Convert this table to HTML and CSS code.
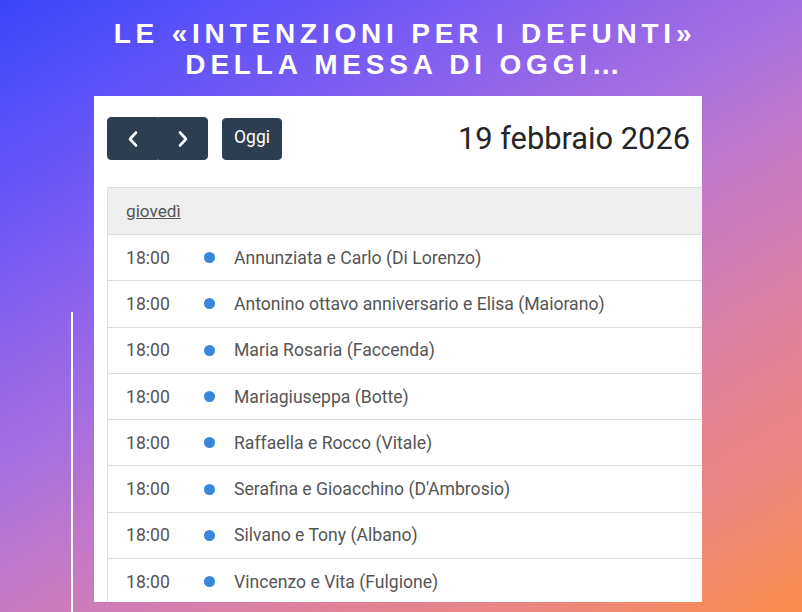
FILE: index.html
```html
<!DOCTYPE html>
<html lang="it">
<head>
<meta charset="utf-8">
<title>Intenzioni per i defunti</title>
<link rel="stylesheet" href="styles.css">
</head>
<body>
<div class="page">
  <h1 class="headline">LE «INTENZIONI PER I DEFUNTI»<br>DELLA MESSA DI OGGI…</h1>
  <div class="stage">
    <div class="rule"></div>
    <div class="panel">
      <div class="toolbar">
        <div class="left">
          <div class="group">
            <button class="btn icon" aria-label="precedente">
              <svg width="14" height="18" viewBox="0 0 14 18"><path d="M10 2.5 L4 9 L10 15.5" fill="none" stroke="#fff" stroke-width="2.6" stroke-linecap="round" stroke-linejoin="round"/></svg>
            </button>
            <button class="btn icon" aria-label="successivo">
              <svg width="14" height="18" viewBox="0 0 14 18"><path d="M4 2.5 L10 9 L4 15.5" fill="none" stroke="#fff" stroke-width="2.6" stroke-linecap="round" stroke-linejoin="round"/></svg>
            </button>
          </div>
          <button class="btn today">Oggi</button>
        </div>
        <h2 class="title">19 febbraio 2026</h2>
      </div>
      <div class="list">
        <div class="day"><a href="#">giovedì</a></div>
        <div class="row"><span class="time">18:00</span><span class="dot"></span><span class="name">Annunziata e Carlo (Di Lorenzo)</span></div>
        <div class="row"><span class="time">18:00</span><span class="dot"></span><span class="name">Antonino ottavo anniversario e Elisa (Maiorano)</span></div>
        <div class="row"><span class="time">18:00</span><span class="dot"></span><span class="name">Maria Rosaria (Faccenda)</span></div>
        <div class="row"><span class="time">18:00</span><span class="dot"></span><span class="name">Mariagiuseppa (Botte)</span></div>
        <div class="row"><span class="time">18:00</span><span class="dot"></span><span class="name">Raffaella e Rocco (Vitale)</span></div>
        <div class="row"><span class="time">18:00</span><span class="dot"></span><span class="name">Serafina e Gioacchino (D'Ambrosio)</span></div>
        <div class="row"><span class="time">18:00</span><span class="dot"></span><span class="name">Silvano e Tony (Albano)</span></div>
        <div class="row"><span class="time">18:00</span><span class="dot"></span><span class="name">Vincenzo e Vita (Fulgione)</span></div>
      </div>
    </div>
  </div>
</div>
</body>
</html>
```

FILE: styles.css
```css
html, body {
  margin: 0;
  padding: 0;
}
body {
  width: 802px;
  height: 612px;
  overflow: hidden;
  background: linear-gradient(150deg, #3a46fc 0%, #7a5cf4 25%, #a56ee0 43%, #c77ac4 57%, #d880a8 68%, #ec8680 85%, #fc8c4c 100%);
  font-family: Roboto, "Liberation Sans", sans-serif;
}
.page {
  height: 612px;
  display: flex;
  flex-direction: column;
}
.headline {
  margin: 0;
  padding-top: 18px;
  padding-left: 8px;
  text-align: center;
  color: #fff;
  font-family: "Liberation Sans", Arial, sans-serif;
  font-weight: 700;
  font-size: 28px;
  line-height: 31px;
  letter-spacing: 4.8px;
  height: 78px;
  box-sizing: border-box;
}
.stage {
  flex: 1;
  display: flex;
  align-items: flex-start;
  padding-left: 71px;
}
.rule {
  width: 2px;
  height: 300px;
  margin-top: 234px;
  background: #fff;
  flex: none;
}
.panel {
  margin-left: 21px;
  margin-top: 18px;
  width: 608px;
  height: 506px;
  background: #fff;
  overflow: hidden;
  box-sizing: border-box;
  padding: 21px 12px 0 13px;
}
.toolbar {
  display: flex;
  justify-content: space-between;
  align-items: center;
  height: 43px;
  margin-bottom: 27px;
}
.left {
  display: flex;
  align-items: center;
  gap: 14px;
}
.group {
  display: flex;
}
.btn {
  background: #2c3e50;
  border: 1px solid #2c3e50;
  color: #fff;
  font-family: Roboto, "Liberation Sans", sans-serif;
  font-size: 17.5px;
  padding: 0;
  margin: 0;
  cursor: pointer;
}
.btn.icon {
  width: 50px;
  height: 43px;
  display: flex;
  align-items: center;
  justify-content: center;
}
.group .btn.icon:first-child {
  border-radius: 4px 0 0 4px;
  width: 51px;
}
.group .btn.icon:last-child {
  border-radius: 0 4px 4px 0;
}
.btn.today {
  height: 42px;
  width: 60px;
  border-radius: 4px;
  padding-bottom: 3px;
}
.title {
  margin: 0;
  font-weight: 400;
  font-size: 30.8px;
  color: #262626;
}
.list {
  margin-right: -40px;
  border: 1px solid #ddd;
  border-bottom: 0;
}
.day {
  background: #efefef;
  height: 46px;
  display: flex;
  align-items: center;
  padding-left: 18px;
  border-bottom: 1px solid #ddd;
}
.day a {
  color: #555;
  font-size: 17.2px;
  text-decoration: underline;
}
.row {
  height: 45.3px;
  display: flex;
  align-items: center;
  border-bottom: 1px solid #ddd;
  color: #555;
  font-size: 17.6px;
}
.time {
  width: 96px;
  box-sizing: border-box;
  padding-left: 18px;
  flex: none;
}
.dot {
  width: 11px;
  height: 11px;
  border-radius: 50%;
  background: #3788d8;
  flex: none;
  margin-right: 19px;
}
.name {
  white-space: nowrap;
}
```
